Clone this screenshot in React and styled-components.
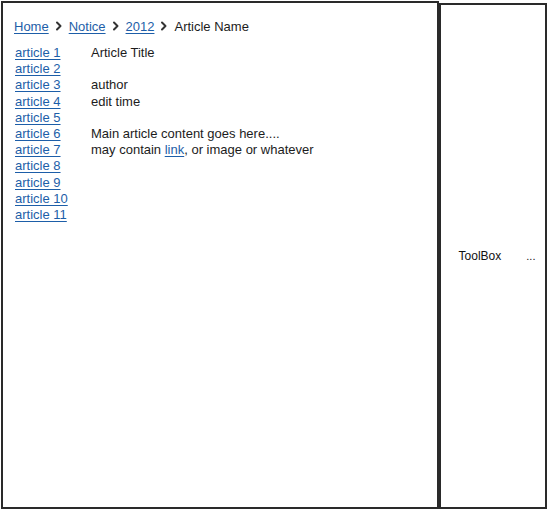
import React from 'react';
import styled, { createGlobalStyle } from 'styled-components';

const GlobalStyle = createGlobalStyle`
  html, body {
    margin: 0;
    padding: 0;
    background: #fff;
  }
  body {
    font-family: 'Liberation Sans', Arial, sans-serif;
    color: #1c1c1c;
  }
`;

const Page = styled.div`
  display: flex;
  align-items: flex-start;
  width: 549px;
  height: 511px;
  box-sizing: border-box;
  padding: 1px 0 0 1px;
`;

const MainPanel = styled.div`
  width: 438px;
  height: 508px;
  box-sizing: border-box;
  border: 2px solid #2a2a2a;
  padding: 14px 0 0 11px;
  font-size: 13px;
`;

const ToolPanel = styled.div`
  width: 108px;
  height: 506px;
  margin-top: 2px;
  box-sizing: border-box;
  border: 2px solid #2a2a2a;
  display: flex;
  align-items: center;
  justify-content: center;
  gap: 25px;
  padding-left: 8px;
  font-size: 12px;
  color: #111;
`;

const Dots = styled.span`
  font-size: 11px;
`;

const Breadcrumb = styled.nav`
  display: flex;
  align-items: center;
  gap: 6px;
  height: 18px;
  margin-bottom: 10px;
`;

const Link = styled.a`
  color: #1d5ea8;
  text-decoration: underline;
  text-underline-offset: 2px;
  cursor: pointer;
`;

const Chevron = styled.svg`
  width: 8px;
  height: 10px;
  flex-shrink: 0;
`;

const Body = styled.div`
  display: flex;
  line-height: 16.2px;
`;

const Nav = styled.div`
  display: flex;
  flex-direction: column;
  width: 76px;
  padding-left: 1px;
`;

const Content = styled.div`
  display: flex;
  flex-direction: column;
`;

const Line = styled.div`
  height: 16.2px;
  white-space: nowrap;
`;

const Arrow = () => (
  <Chevron viewBox="0 0 8 10">
    <path d="M2 1.5 L5.5 5 L2 8.5" fill="none" stroke="#333" strokeWidth="2" strokeLinecap="round" strokeLinejoin="round" />
  </Chevron>
);

const articles = Array.from({ length: 11 }, (_, i) => `article ${i + 1}`);

const App = () => {
  return (
    <>
      <GlobalStyle />
      <Page>
        <MainPanel>
          <Breadcrumb>
            <Link>Home</Link>
            <Arrow />
            <Link>Notice</Link>
            <Arrow />
            <Link>2012</Link>
            <Arrow />
            <span>Article Name</span>
          </Breadcrumb>
          <Body>
            <Nav>
              {articles.map((a) => (
                <Line key={a}>
                  <Link>{a}</Link>
                </Line>
              ))}
            </Nav>
            <Content>
              <Line>Article Title</Line>
              <Line />
              <Line>author</Line>
              <Line>edit time</Line>
              <Line />
              <Line>Main article content goes here....</Line>
              <Line>
                may contain <Link>link</Link>, or image or whatever
              </Line>
            </Content>
          </Body>
        </MainPanel>
        <ToolPanel>
          <span>ToolBox</span>
          <Dots>...</Dots>
        </ToolPanel>
      </Page>
    </>
  );
};

export default App;
